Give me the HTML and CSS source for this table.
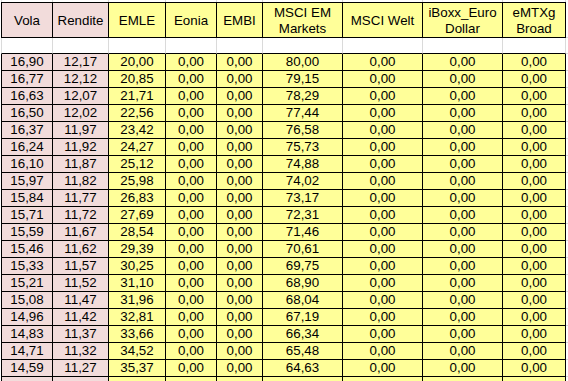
FILE: index.html
```html
<!DOCTYPE html>
<html>
<head>
<meta charset="utf-8">
<link rel="stylesheet" href="styles.css">
</head>
<body>
<div class="sheet">
  <div class="row top"><span></span><span></span><span></span><span></span><span></span><span></span><span></span><span></span><span></span><span class="f"></span></div>
  <div class="row hd">
    <span class="p">Vola</span><span class="p">Rendite</span><span class="y">EMLE</span><span class="y">Eonia</span><span class="y">EMBI</span><span class="y">MSCI EM<br>Markets</span><span class="y">MSCI Welt</span><span class="y">iBoxx_Euro<br>Dollar</span><span class="y">eMTXg<br>Broad</span><span class="f"></span>
  </div>
  <div class="row gap"><span></span><span></span><span></span><span></span><span></span><span></span><span></span><span></span><span></span><span class="f"></span></div>
  <div class="row r"><span class="p">16,90</span><span class="p">12,17</span><span class="y">20,00</span><span class="y">0,00</span><span class="y">0,00</span><span class="y">80,00</span><span class="y">0,00</span><span class="y">0,00</span><span class="y">0,00</span><span class="f"></span></div>
  <div class="row r"><span class="p">16,77</span><span class="p">12,12</span><span class="y">20,85</span><span class="y">0,00</span><span class="y">0,00</span><span class="y">79,15</span><span class="y">0,00</span><span class="y">0,00</span><span class="y">0,00</span><span class="f"></span></div>
  <div class="row r"><span class="p">16,63</span><span class="p">12,07</span><span class="y">21,71</span><span class="y">0,00</span><span class="y">0,00</span><span class="y">78,29</span><span class="y">0,00</span><span class="y">0,00</span><span class="y">0,00</span><span class="f"></span></div>
  <div class="row r"><span class="p">16,50</span><span class="p">12,02</span><span class="y">22,56</span><span class="y">0,00</span><span class="y">0,00</span><span class="y">77,44</span><span class="y">0,00</span><span class="y">0,00</span><span class="y">0,00</span><span class="f"></span></div>
  <div class="row r"><span class="p">16,37</span><span class="p">11,97</span><span class="y">23,42</span><span class="y">0,00</span><span class="y">0,00</span><span class="y">76,58</span><span class="y">0,00</span><span class="y">0,00</span><span class="y">0,00</span><span class="f"></span></div>
  <div class="row r"><span class="p">16,24</span><span class="p">11,92</span><span class="y">24,27</span><span class="y">0,00</span><span class="y">0,00</span><span class="y">75,73</span><span class="y">0,00</span><span class="y">0,00</span><span class="y">0,00</span><span class="f"></span></div>
  <div class="row r"><span class="p">16,10</span><span class="p">11,87</span><span class="y">25,12</span><span class="y">0,00</span><span class="y">0,00</span><span class="y">74,88</span><span class="y">0,00</span><span class="y">0,00</span><span class="y">0,00</span><span class="f"></span></div>
  <div class="row r"><span class="p">15,97</span><span class="p">11,82</span><span class="y">25,98</span><span class="y">0,00</span><span class="y">0,00</span><span class="y">74,02</span><span class="y">0,00</span><span class="y">0,00</span><span class="y">0,00</span><span class="f"></span></div>
  <div class="row r"><span class="p">15,84</span><span class="p">11,77</span><span class="y">26,83</span><span class="y">0,00</span><span class="y">0,00</span><span class="y">73,17</span><span class="y">0,00</span><span class="y">0,00</span><span class="y">0,00</span><span class="f"></span></div>
  <div class="row r"><span class="p">15,71</span><span class="p">11,72</span><span class="y">27,69</span><span class="y">0,00</span><span class="y">0,00</span><span class="y">72,31</span><span class="y">0,00</span><span class="y">0,00</span><span class="y">0,00</span><span class="f"></span></div>
  <div class="row r"><span class="p">15,59</span><span class="p">11,67</span><span class="y">28,54</span><span class="y">0,00</span><span class="y">0,00</span><span class="y">71,46</span><span class="y">0,00</span><span class="y">0,00</span><span class="y">0,00</span><span class="f"></span></div>
  <div class="row r"><span class="p">15,46</span><span class="p">11,62</span><span class="y">29,39</span><span class="y">0,00</span><span class="y">0,00</span><span class="y">70,61</span><span class="y">0,00</span><span class="y">0,00</span><span class="y">0,00</span><span class="f"></span></div>
  <div class="row r"><span class="p">15,33</span><span class="p">11,57</span><span class="y">30,25</span><span class="y">0,00</span><span class="y">0,00</span><span class="y">69,75</span><span class="y">0,00</span><span class="y">0,00</span><span class="y">0,00</span><span class="f"></span></div>
  <div class="row r"><span class="p">15,21</span><span class="p">11,52</span><span class="y">31,10</span><span class="y">0,00</span><span class="y">0,00</span><span class="y">68,90</span><span class="y">0,00</span><span class="y">0,00</span><span class="y">0,00</span><span class="f"></span></div>
  <div class="row r"><span class="p">15,08</span><span class="p">11,47</span><span class="y">31,96</span><span class="y">0,00</span><span class="y">0,00</span><span class="y">68,04</span><span class="y">0,00</span><span class="y">0,00</span><span class="y">0,00</span><span class="f"></span></div>
  <div class="row r"><span class="p">14,96</span><span class="p">11,42</span><span class="y">32,81</span><span class="y">0,00</span><span class="y">0,00</span><span class="y">67,19</span><span class="y">0,00</span><span class="y">0,00</span><span class="y">0,00</span><span class="f"></span></div>
  <div class="row r"><span class="p">14,83</span><span class="p">11,37</span><span class="y">33,66</span><span class="y">0,00</span><span class="y">0,00</span><span class="y">66,34</span><span class="y">0,00</span><span class="y">0,00</span><span class="y">0,00</span><span class="f"></span></div>
  <div class="row r"><span class="p">14,71</span><span class="p">11,32</span><span class="y">34,52</span><span class="y">0,00</span><span class="y">0,00</span><span class="y">65,48</span><span class="y">0,00</span><span class="y">0,00</span><span class="y">0,00</span><span class="f"></span></div>
  <div class="row r"><span class="p">14,59</span><span class="p">11,27</span><span class="y">35,37</span><span class="y">0,00</span><span class="y">0,00</span><span class="y">64,63</span><span class="y">0,00</span><span class="y">0,00</span><span class="y">0,00</span><span class="f"></span></div>
  <div class="row r"><span class="p"></span><span class="p"></span><span class="y"></span><span class="y"></span><span class="y"></span><span class="y"></span><span class="y"></span><span class="y"></span><span class="y"></span><span class="f"></span></div>
</div>
</body>
</html>
```
FILE: styles.css
```css
html, body {
  margin: 0;
  padding: 0;
  background: #ffffff;
  overflow: hidden;
}

.sheet {
  padding-left: 1px;
  font-family: "Liberation Sans", Arial, sans-serif;
  font-size: 13.33px;
  color: #000;
}

.row {
  display: grid;
  grid-template-columns: 52px 56px 57px 51px 46px 80px 80px 80px 63px 3px;
}

.row > span {
  box-sizing: border-box;
  display: flex;
  align-items: center;
  justify-content: center;
  text-align: center;
  white-space: nowrap;
  border-right: 1px solid #000;
  border-bottom: 1px solid #000;
}

.row > span:first-child {
  border-left: 1px solid #000;
}

.row > span.f {
  border-right: none;
  border-bottom: 1px solid #dadada;
  background: #fff;
}

.p { background: #f2dcdb; }
.y { background: #ffff99; }

/* thin strip above the table */
.top { height: 2px; }
.top > span {
  border-right: 1px solid #dadada;
  border-bottom: none;
}
.top > span:first-child { border-left-color: #dadada; }
.top > span.f { border-bottom: none; }

/* header */
.hd > span {
  height: 36px;
  border-top: 1px solid #000;
  line-height: 16px;
  padding-top: 1px;
}
.hd > span.f { border-top: none; }

/* empty spacer row */
.gap > span {
  height: 16px;
  border-right-color: #dadada;
}
.gap > span:first-child { border-left-color: #dadada; }

/* data rows */
.r > span {
  height: 17px;
  line-height: 16px;
}
```
